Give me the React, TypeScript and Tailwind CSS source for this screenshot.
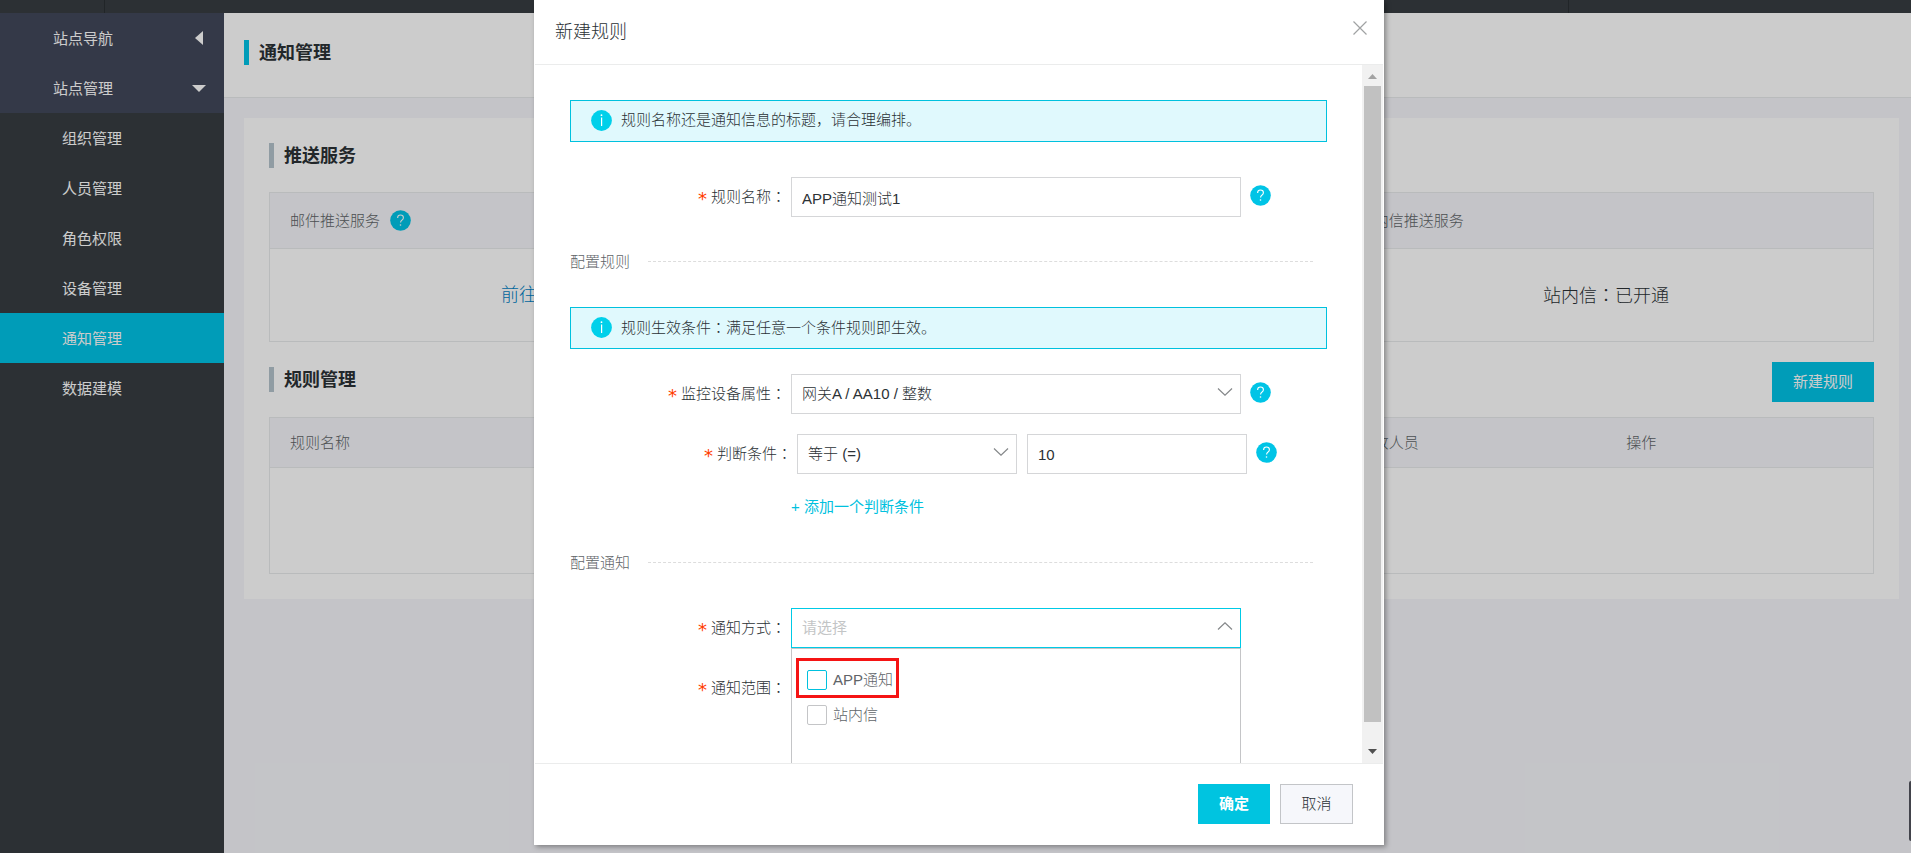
import React from 'react';

const navItems = ['组织管理', '人员管理', '角色权限', '设备管理', '通知管理', '数据建模'];

const HelpIcon: React.FC = () => (
  <svg className="w-[21px] h-[21px] shrink-0" viewBox="0 0 21 21" fill="none" aria-hidden="true">
    <circle cx="10.5" cy="10.5" r="10.3" fill="#00c4e6" />
    <path
      d="M7.6 7.900C7.600 6.100 8.800 5 10.500 5s2.900 1.100 2.900 2.700c0 1.300-.8 1.900-1.600 2.600-.8.6-1.200 1.100-1.200 2.300"
      stroke="#fff"
      strokeWidth="1.1"
    />
    <circle cx="10.5" cy="15" r="0.8" fill="#fff" />
  </svg>
);

const InfoIcon: React.FC = () => (
  <svg className="w-[21px] h-[21px] shrink-0" viewBox="0 0 21 21" aria-hidden="true">
    <circle cx="10.5" cy="10.5" r="10.4" fill="#00d0ea" />
    <circle cx="10.5" cy="5.2" r="0.9" fill="#fff" />
    <rect x="10" y="7.5" width="1.2" height="8.5" fill="#fff" />
  </svg>
);

const Chevron: React.FC<{ up?: boolean }> = ({ up }) => (
  <svg
    className="absolute right-2 top-3.5 w-4 h-2 pointer-events-none"
    viewBox="0 0 16 8"
    fill="none"
    stroke="#85888a"
    strokeWidth="1.2"
    aria-hidden="true"
  >
    <path d={up ? 'M1 7.5 8 .8l7 6.7' : 'M1 .5 8 7.2 15 .5'} />
  </svg>
);

// full-width colon sits in the middle of its box
const Colon: React.FC = () => <span className="font-['Noto_Sans_CJK_TC',sans-serif]">：</span>;

const Alert: React.FC<{ children: React.ReactNode }> = ({ children }) => (
  <div className="flex items-center gap-[9px] h-[42px] px-5 pb-0.5 bg-[#e0f9fd] border border-[#00c1de]">
    <InfoIcon />
    <p>{children}</p>
  </div>
);

const Divider: React.FC<{ title: string }> = ({ title }) => (
  <div className="flex items-center gap-[18px] h-[21px] mt-[34px] mb-[35px] pr-3.5 text-[#606468]">
    <h3>{title}</h3>
    <div className="flex-1 border-t border-dashed border-[#ddd]" />
  </div>
);

interface FieldProps {
  label: string;
  id: string;
  indent?: boolean;
  help?: boolean;
  children?: React.ReactNode;
}

const Field: React.FC<FieldProps> = ({ label, id, indent, help, children }) => (
  <div className="flex items-center h-10">
    <label htmlFor={id} className={`flex items-center justify-end shrink-0 pr-[5px] pb-px ${indent ? 'w-[227px]' : 'w-[221px]'}`}>
      <span className="pt-1 mr-1 font-['DejaVu_Sans',sans-serif] text-lg leading-5 font-normal text-[#ff3c00]">*</span>
      <span>{label}<Colon /></span>
    </label>
    {children}
    {help && <span className="ml-[9px] pb-[3px]"><HelpIcon /></span>}
  </div>
);

const controlClass = 'block w-full h-10 px-2.5 bg-white border border-[#d5d6d8] rounded-none outline-none appearance-none';

const SectionTitle: React.FC<{ title: string }> = ({ title }) => (
  <h2 className="h-[25px] border-l-[5px] border-[#b5c4cc] pl-2.5 text-lg leading-[27px] font-bold">{title}</h2>
);

const Sidebar: React.FC = () => (
  <nav className="w-[224px] shrink-0 font-normal text-white">
    <div className="bg-[#42485a]">
      <button className="flex items-center justify-between w-full h-[50px] pl-[53px] pr-[21px]">
        <span className="pt-0.5">站点导航</span>
        <svg className="w-2 h-3.5" viewBox="0 0 8 14" fill="currentColor"><path d="M8 0v14L0 7z" /></svg>
      </button>
      <button className="flex items-center justify-between w-full h-[50px] pl-[53px] pr-[18px]">
        <span className="pt-0.5">站点管理</span>
        <svg className="w-3.5 h-[7px]" viewBox="0 0 14 7" fill="currentColor"><path d="M0 0h14L7 7z" /></svg>
      </button>
    </div>
    {navItems.map((item) => (
      <a
        key={item}
        href="#"
        className={`flex items-center h-[50px] pl-[62px] pt-0.5 ${item === '通知管理' ? 'bg-[#00c4e6]' : ''}`}
      >
        {item}
      </a>
    ))}
  </nav>
);

const Page: React.FC = () => (
  <div className="flex flex-col min-h-screen bg-[#373d41]">
    <header className="flex h-[13px] bg-[#373d41]">
      <div className="w-[105px] border-r border-[#2a2f32]" />
      <div className="flex-1" />
      <div className="w-[343px] border-l border-[#2a2f32]" />
    </header>
    <div className="flex flex-1">
      <Sidebar />
      <main className="flex-1 bg-[#f5f6fa]">
        <div className="h-[85px] pl-5 pt-[27px] bg-white border-b border-[#e8eaec]">
          <h1 className="h-[25px] border-l-[5px] border-[#00c4e6] pl-2.5 text-lg leading-[27px] font-bold">通知管理</h1>
        </div>
        <div className="ml-5 mr-3 mt-5 p-[25px] bg-white">
          <SectionTitle title="推送服务" />
          <table className="w-full mt-6 table-fixed border border-[#e8eaec]">
            <thead>
              <tr className="h-14 bg-[#f5f6fa] border-b border-[#e8eaec] text-left text-[#606468]">
                <th className="px-5 font-light">
                  <span className="flex items-center gap-2.5">邮件推送服务<HelpIcon /></span>
                </th>
                <th />
                <th className="px-5 font-light">站内信推送服务</th>
              </tr>
            </thead>
            <tbody>
              <tr className="h-[93px] text-lg text-center">
                <td><a href="#" className="text-[#007fc4]">前往开通</a></td>
                <td />
                <td>站内信<Colon />已开通</td>
              </tr>
            </tbody>
          </table>
          <div className="flex items-start justify-between mt-5">
            <div className="pt-[5px]"><SectionTitle title="规则管理" /></div>
            <button className="w-[102px] h-10 bg-[#00c4e6] font-normal text-white">新建规则</button>
          </div>
          <table className="w-full mt-[15px] table-fixed border border-[#e8eaec]">
            <thead>
              <tr className="h-[50px] bg-[#f5f6fa] border-b border-[#e8eaec] text-left text-[#606468]">
                <th className="px-5 font-light">规则名称</th>
                <th colSpan={3} />
                <th className="px-5 font-light">接收人员</th>
                <th className="px-5 font-light">操作</th>
              </tr>
            </thead>
            <tbody>
              <tr className="h-[106px]"><td colSpan={6} /></tr>
            </tbody>
          </table>
        </div>
      </main>
    </div>
  </div>
);

const NotifyOptions: React.FC = () => (
  <div className="absolute top-full inset-x-0 z-10 h-[160px] pt-5 pl-[15px] bg-white border border-[#c4c5c7] text-[#606468]">
    <div className="absolute left-1 top-[9px] w-[103px] h-10 border-[3px] border-[#f51414]" />
    <label className="flex items-center gap-1.5 mt-px h-5">
      <input type="checkbox" className="w-5 h-5 appearance-none border border-[#00c1de] rounded-xs" />
      APP通知
    </label>
    <label className="flex items-center gap-1.5 mt-[15px] h-5">
      <input type="checkbox" className="w-5 h-5 appearance-none border border-[#c4c5c7] rounded-xs" />
      站内信
    </label>
  </div>
);

const ScrollBar: React.FC = () => (
  <div className="flex flex-col items-center w-[21px] shrink-0 bg-[#f1f1f1]">
    <svg className="w-[21px] h-[21px]" viewBox="0 0 21 21" fill="#a3a3a3"><path d="M6 14h9l-4.500-5z" /></svg>
    <div className="w-[17px] flex-1 bg-[#c1c1c1]" />
    <svg className="w-[21px] h-[41px]" viewBox="0 0 21 41" fill="#505050"><path d="M6 27h9l-4.500 5z" /></svg>
  </div>
);

const RuleDialog: React.FC = () => (
  <div
    role="dialog"
    aria-label="新建规则"
    className="flex flex-col w-[850px] h-[calc(100vh-8px)] px-px pb-px bg-white shadow-[2px_2px_5px_rgba(0,0,0,0.35)]"
  >
    <div className="flex justify-between h-[65px] shrink-0 pl-5 pr-4 border-b border-[#ebecec]">
      <h2 className="text-lg leading-[65px] font-light">新建规则</h2>
      <button aria-label="关闭" className="h-[55px]">
        <svg className="w-3.5 h-3.5" viewBox="0 0 14 14" stroke="#a0a2a3" strokeWidth="1.2">
          <path d="M.5.5l13 13M13.500.5l-13 13" />
        </svg>
      </button>
    </div>
    <div className="flex flex-1 min-h-0">
      <form className="flex-1 px-[35px] pt-[35px] overflow-hidden">
        <Alert>规则名称还是通知信息的标题，请合理编排。</Alert>
        <div className="mt-[35px]">
          <Field label="规则名称" id="name" help>
            <input id="name" type="text" defaultValue="APP通知测试1" className={`${controlClass} max-w-[450px]`} />
          </Field>
        </div>
        <Divider title="配置规则" />
        <Alert>规则生效条件<Colon />满足任意一个条件规则即生效。</Alert>
        <div className="flex flex-col gap-5 mt-[25px]">
          <Field label="监控设备属性" id="attr" help>
            <div className="relative w-[450px]">
              <select id="attr" className={controlClass}>
                <option>网关A / AA10 / 整数</option>
              </select>
              <Chevron />
            </div>
          </Field>
          <Field label="判断条件" id="operator" indent help>
            <div className="relative w-[220px]">
              <select id="operator" className={controlClass}>
                <option>等于 (=)</option>
              </select>
              <Chevron />
            </div>
            <input type="text" aria-label="条件值" defaultValue="10" className={`${controlClass} max-w-[220px] ml-2.5`} />
          </Field>
        </div>
        <button type="button" className="block mt-[22px] ml-[221px] leading-[22px] font-normal text-[#00c1de]">
          + 添加一个判断条件
        </button>
        <Divider title="配置通知" />
        <div className="flex flex-col gap-5">
          <Field label="通知方式" id="method">
            <div className="relative w-[450px]">
              <select id="method" className="block w-full h-10 px-2.5 bg-white border border-[#00cae6] rounded-none outline-none appearance-none font-normal text-[#c3c5c6]">
                <option>请选择</option>
              </select>
              <Chevron up />
              <NotifyOptions />
            </div>
          </Field>
          <Field label="通知范围" id="scope" />
        </div>
      </form>
      <ScrollBar />
    </div>
    <div className="flex justify-end gap-2.5 shrink-0 h-[81px] pt-5 pr-[30px] border-t border-[#ebecec]">
      <button className="w-[72px] h-10 bg-[#00c4e0] text-white font-bold">确定</button>
      <button className="w-[73px] h-10 bg-[#f6f7fb] border border-[#c3c5c8]">取消</button>
    </div>
  </div>
);

export default function App() {
  return (
    <div className="relative font-['Liberation_Sans','Noto_Sans_CJK_SC',sans-serif] text-[15px] leading-5 font-light text-[#2b3135]">
      <Page />
      <div className="absolute inset-0 flex items-start justify-center pl-[7px] bg-black/20">
        <RuleDialog />
      </div>
      {/* collapsed feedback tab */}
      <div className="absolute right-0 bottom-3 w-0.5 h-[60px] rounded-l-sm bg-[#42434b]" />
    </div>
  );
}
